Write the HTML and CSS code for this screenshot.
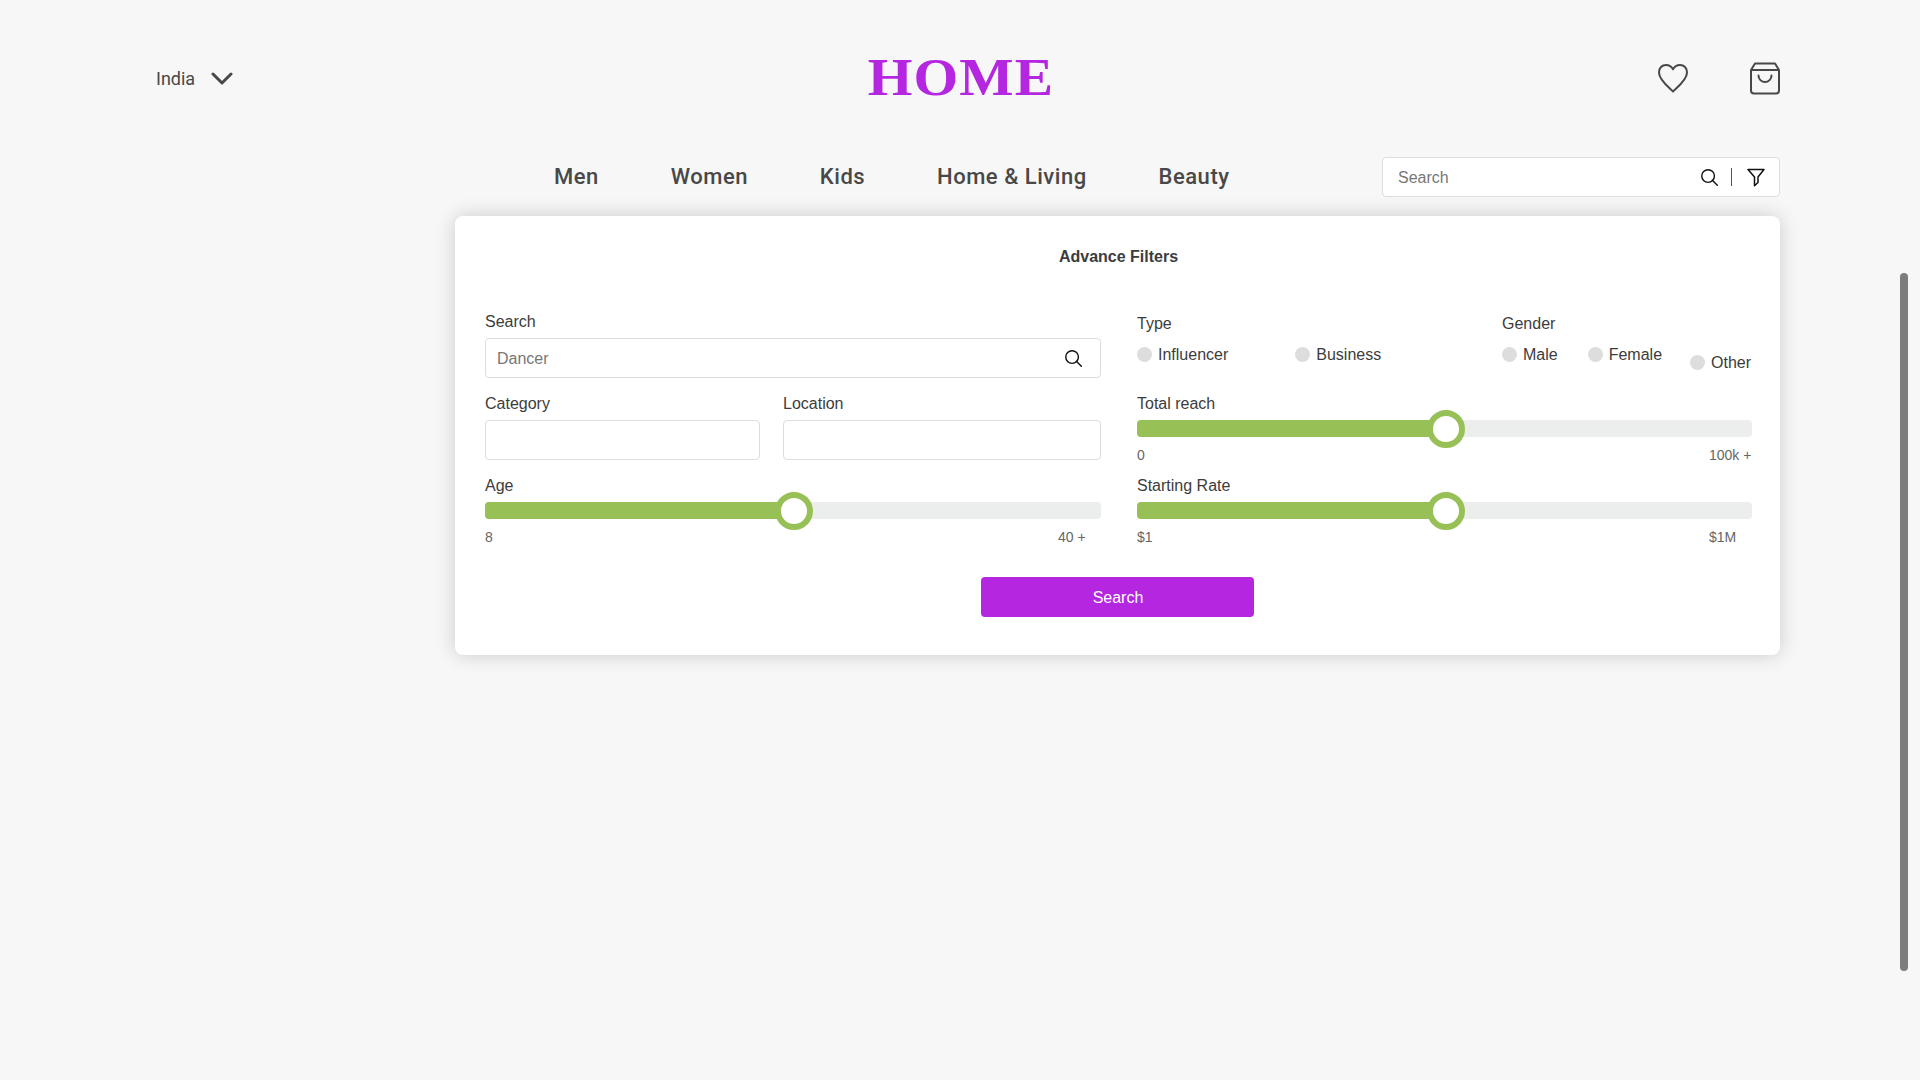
FILE: index.html
```html
<!DOCTYPE html>
<html lang="en">
<head>
<meta charset="utf-8">
<title>Home</title>
<link rel="stylesheet" href="styles.css">
</head>
<body>
<header class="top">
  <div class="country"><span>India</span>
    <svg width="22" height="14" viewBox="0 0 22 14"><path d="M2 2l9 9 9-9" fill="none" stroke="currentColor" stroke-width="3" stroke-linecap="round"/></svg>
  </div>
  <h1 class="logo">HOME</h1>
  <div class="actions">
    <svg class="heart" width="32" height="32" viewBox="0 0 32 32"><path d="M16 29.500C11.500 25 2 18 2 10.500C2 6 5 3 9 3C12 3 14.500 4.500 16 7.300C17.500 4.500 20 3 23 3C27 3 30 6 30 10.500C30 18 20.500 25 16 29.500Z"/></svg>
    <svg width="30" height="33" viewBox="0 0 30 33"><path d="M1 8L5 1.500H25L29 8V28.500a3 3 0 0 1-3 3H4a3 3 0 0 1-3-3ZM1 8H29M8.500 13.500a6.500 6.500 0 0 0 13 0"/></svg>
  </div>
</header>
<div class="bar">
  <nav class="nav"><a>Men</a><a>Women</a><a>Kids</a><a>Home &amp; Living</a><a>Beauty</a></nav>
  <div class="field quick"><span>Search</span>
    <svg class="glass" width="17" height="17" viewBox="0 0 18 18"><circle cx="7.500" cy="7.500" r="6.700"/><path d="M12 12l5.300 5.300"/></svg>
    <i class="divider"></i>
    <svg class="funnel" width="18" height="19" viewBox="0 0 18 19"><path d="M1 1.500H17L11 9V14.500L7.500 17.700V9Z"/></svg>
  </div>
</div>
<section class="panel">
  <h2 class="title">Advance Filters</h2>
  <div class="columns">
    <div class="column">
      <div class="group"><label>Search</label>
        <div class="field main"><span>Dancer</span>
          <svg class="glass" width="17" height="17" viewBox="0 0 18 18"><circle cx="7.500" cy="7.500" r="6.700"/><path d="M12 12l5.300 5.300"/></svg>
        </div>
      </div>
      <div class="pair">
        <div class="group"><label>Category</label><div class="field"></div></div>
        <div class="group"><label>Location</label><div class="field"></div></div>
      </div>
      <div class="group"><label>Age</label>
        <div class="track"><div class="fill"></div><div class="knob"></div></div>
        <div class="scale"><span>8</span><span class="max">40 +</span></div>
      </div>
    </div>
    <div class="column">
      <div class="choices">
        <div class="choice type"><label>Type</label>
          <div class="options"><span class="radio"><b>Influencer</b></span><span class="radio"><b>Business</b></span></div>
        </div>
        <div class="choice gender"><label>Gender</label>
          <div class="options"><span class="radio"><b>Male</b></span><span class="radio"><b>Female</b></span><span class="radio lower"><b>Other</b></span></div>
        </div>
      </div>
      <div class="group"><label>Total reach</label>
        <div class="track"><div class="fill"></div><div class="knob"></div></div>
        <div class="scale"><span>0</span><span class="max">100k +</span></div>
      </div>
      <div class="group"><label>Starting Rate</label>
        <div class="track"><div class="fill"></div><div class="knob"></div></div>
        <div class="scale"><span>$1</span><span class="max">$1M</span></div>
      </div>
    </div>
  </div>
  <button class="submit">Search</button>
</section>
<div class="scrollbar"></div>
</body>
</html>
```
FILE: styles.css
```css
* { box-sizing: border-box; }
body { margin: 0; height: 1080px; overflow: hidden; background: #f7f7f7; color: #3c3c3c; font: 16px/18px "Liberation Sans", Arial, sans-serif; }
svg { display: block; flex: none; fill: none; stroke: #484848; stroke-width: 2; stroke-linejoin: round; stroke-linecap: round; }
h1, h2 { margin: 0; }
.top { display: grid; grid-template-columns: 1fr auto 1fr; align-items: center; height: 157px; padding: 0 140px; }
.country { display: flex; align-items: center; gap: 16px; padding-left: 16px; font: 18px/22px Roboto, sans-serif; color: #484848; }
.logo { margin-bottom: 4px; padding-left: 1px; font: bold 53px/60px "Liberation Serif", serif; letter-spacing: 1px; color: #b526e0; transform: scaleX(1.085); }
.actions { display: flex; justify-content: flex-end; align-items: center; gap: 61px; }
.heart { margin-bottom: 2px; }
.bar { display: flex; justify-content: space-between; height: 40px; padding: 0 140px 0 554px; }
.nav { display: flex; gap: 71.800px; align-items: center; font: 500 22px/40px Roboto, sans-serif; letter-spacing: .53px; color: #484848; }
.field { display: flex; align-items: center; height: 40px; border: 1px solid #ddd; border-radius: 4px; background: #fff; color: #777; }
.field span { padding-top: 2px; }
.field svg { stroke: #111; stroke-width: 1.500; }
.field .glass { margin-left: auto; }
.quick { width: 398px; padding: 0 14px 0 15px; }
.divider { width: 1px; height: 18px; margin: 0 15px 0 13px; background: #555; }
.panel { width: 1325px; height: 439px; margin: 19px 140px 0 455px; padding: 32px 28px 38px 30px; border-radius: 8px; background: #fff; box-shadow: 0 0 20px rgba(0,0,0,.18); display: flex; flex-direction: column; }
.title { font-size: 16px; line-height: 18px; text-align: center; }
.columns { display: grid; grid-template-columns: 616px 615px; gap: 36px; margin-top: 46px; }
.column { display: flex; flex-direction: column; }
.group { display: flex; flex-direction: column; height: 82px; }
label { display: block; height: 26px; padding-top: 1px; line-height: 18px; }
.main { padding: 0 18px 0 11px; }
.pair { display: grid; grid-template-columns: 275px 318px; gap: 23px; }
.track { position: relative; height: 17px; border-radius: 4px; background: #eceded; flex: none; }
.fill { width: 50%; height: 100%; border-radius: 4px 0 0 4px; background: #97c156; }
.knob { position: absolute; left: calc(50% - 18px); top: -10px; width: 38px; height: 38px; border: 6px solid #97c156; border-radius: 50%; background: #fff; }
.scale { display: flex; justify-content: space-between; margin-top: 10px; font-size: 14px; line-height: 16px; color: #666; }
.max { width: 43px; white-space: nowrap; }
.choices { display: grid; grid-template-columns: 365px 250px; height: 82px; padding-top: 2px; }
.options { display: flex; padding-top: 5px; }
.radio { display: flex; align-items: center; gap: 6px; height: 18px; }
.radio b { padding-top: 2px; font-weight: 400; }
.radio::before { content: ""; width: 15px; height: 15px; border-radius: 50%; background: #ddd; }
.type .options { gap: 67px; }
.gender .options { gap: 30px; }
.lower { margin: 8px 0 0 -2px; }
.submit { width: 273px; height: 40px; margin: auto 0 0 496px; padding: 2px 0 0 1px; border: 0; border-radius: 4px; background: #b526e0; color: #fff; font: 16px "Liberation Sans", Arial, sans-serif; }
.scrollbar { position: absolute; left: 1900px; top: 273px; width: 8px; height: 698px; border-radius: 4px; background: #7d7d7d; }
```
